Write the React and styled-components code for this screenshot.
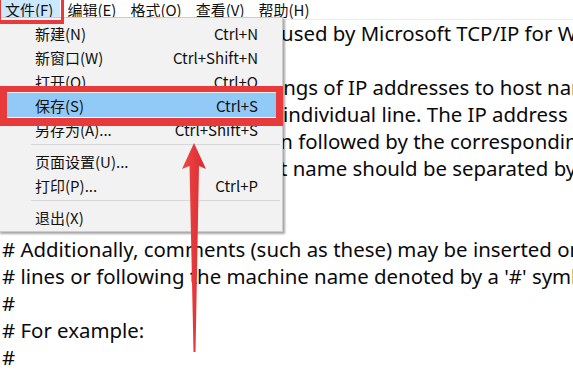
import React from 'react';
import styled, { createGlobalStyle } from 'styled-components';

const GlobalStyle = createGlobalStyle`
  html, body {
    margin: 0;
    padding: 0;
    background: #ffffff;
    overflow: hidden;
  }
`;

const menuTitles = [
  { label: '文件(F)', active: true },
  { label: '编辑(E)' },
  { label: '格式(O)' },
  { label: '查看(V)' },
  { label: '帮助(H)' },
];

const fileMenu = [
  { label: '新建(N)', shortcut: 'Ctrl+N' },
  { label: '新窗口(W)', shortcut: 'Ctrl+Shift+N' },
  { label: '打开(O)...', shortcut: 'Ctrl+O' },
  { label: '保存(S)', shortcut: 'Ctrl+S', hover: true },
  { label: '另存为(A)...', shortcut: 'Ctrl+Shift+S' },
  { separator: true },
  { label: '页面设置(U)...' },
  { label: '打印(P)...', shortcut: 'Ctrl+P' },
  { separator: true },
  { label: '退出(X)' },
];

const lines = [
  '# This is a sample HOSTS file used by Microsoft TCP/IP for Windows.',
  '#',
  '# This file contains the mappings of IP addresses to host names. Each',
  '# entry should be kept on an individual line. The IP address should',
  '# be placed in the first column followed by the corresponding host name.',
  '# The IP address and the host name should be separated by at least one',
  '# space.',
  '#',
  '# Additionally, comments (such as these) may be inserted on individual',
  "# lines or following the machine name denoted by a '#' symbol.",
  '#',
  '# For example:',
  '#',
];

function App() {
  return (
    <Window>
      <GlobalStyle />
      <MenuBar>
        {menuTitles.map((m) => (
          <MenuTitle key={m.label} $active={m.active}>{m.label}</MenuTitle>
        ))}
      </MenuBar>
      <Editor>
        {lines.map((l, i) => (
          <Line key={i}>{l}</Line>
        ))}
      </Editor>

      <Dropdown>
        {fileMenu.map((item, i) =>
          item.separator ? (
            <Separator key={i} />
          ) : (
            <MenuItem key={i} $hover={item.hover}>
              <span>{item.label}</span>
              {item.shortcut && <span>{item.shortcut}</span>}
            </MenuItem>
          )
        )}
      </Dropdown>

      {/* annotation marks drawn over the screenshot */}
      <RedBox $left={-2} $top={-4} $width={66} $height={28} $border="3px 3px 4px 3px" />
      <RedBox $left={0} $top={86} $width={283} $height={40} $border="6px 7px 8px 7px" />

      <Arrow width="573" height="371" viewBox="0 0 573 371">
        <defs>
          <linearGradient id="arrowFill" x1="0" y1="0" x2="1" y2="0">
            <stop offset="0" stopColor="#f04848" />
            <stop offset="1" stopColor="#d82a2e" />
          </linearGradient>
        </defs>
        <polygon
          points="194,143 206,169 199,166 195.5,352 193.5,352 189.5,166 182,169"
          fill="url(#arrowFill)"
        />
      </Arrow>
    </Window>
  );
}

const Window = styled.div`
  position: relative;
  width: 573px;
  height: 371px;
  overflow: hidden;
  background: #ffffff;
`;

const MenuBar = styled.div`
  display: flex;
  height: 19px;
  padding-left: 0;
  border-bottom: 1px solid #ececec;
  font-family: "Noto Sans CJK SC", "Noto Sans", sans-serif;
  font-size: 15px;
  color: #111;
`;

const MenuTitle = styled.div`
  padding: 0 7px;
  line-height: 19px;
  white-space: nowrap;
  background: ${(p) => (p.$active ? '#cce8ff' : 'transparent')};
  &:first-child {
    margin-left: -2px;
  }
`;

const Editor = styled.div`
  font-family: "Noto Sans", "Open Sans", sans-serif;
  font-size: 20.4px;
  line-height: 27px;
  color: #0a0a0a;
  padding-left: 2px;
  white-space: pre;
`;

const Line = styled.div`
  height: 27px;
`;

const Dropdown = styled.div`
  position: absolute;
  left: -2px;
  top: 17px;
  width: 285px;
  padding: 3px 2px 2px;
  box-sizing: border-box;
  background: #f2f2f2;
  border: 1px solid #cccccc;
  box-shadow: 2px 2px 2px rgba(0, 0, 0, 0.35);
  font-family: "Noto Sans CJK SC", "Noto Sans", sans-serif;
  font-size: 15px;
  color: #111;
`;

const MenuItem = styled.div`
  display: flex;
  justify-content: space-between;
  align-items: center;
  height: 24px;
  padding: 0 22px 0 34px;
  white-space: nowrap;
  background: ${(p) => (p.$hover ? '#91c9f7' : 'transparent')};
`;

const Separator = styled.div`
  height: 1px;
  margin: 3px 0 4px 30px;
  background: #d7d7d7;
`;

const RedBox = styled.div`
  position: absolute;
  left: ${(p) => p.$left}px;
  top: ${(p) => p.$top}px;
  width: ${(p) => p.$width}px;
  height: ${(p) => p.$height}px;
  box-sizing: border-box;
  border-style: solid;
  border-color: #e8393b;
  border-width: ${(p) => p.$border};
`;

const Arrow = styled.svg`
  position: absolute;
  left: 0;
  top: 0;
  pointer-events: none;
`;

export default App;
